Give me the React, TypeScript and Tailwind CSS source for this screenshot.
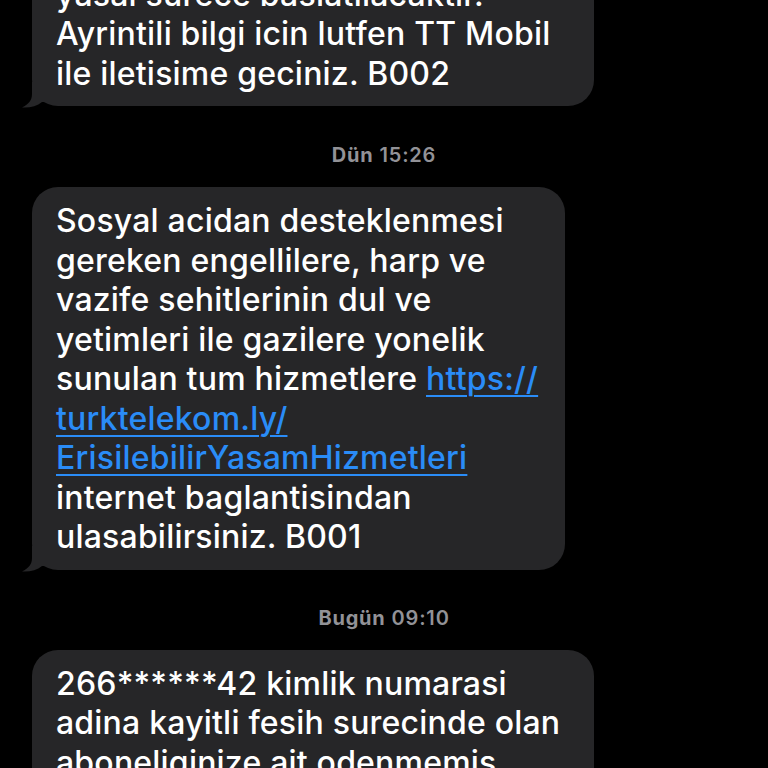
import React from "react";

const Tail = () => (
  <svg
    className="absolute left-[-11px] bottom-[-2px]"
    width="30"
    height="26"
    viewBox="0 0 30 26"
  >
    <path
      d="M11 0 L11 12 C11 18 8 22 1 25.5 C9 26 16 24 21 20 L30 20 L30 0 Z"
      fill="#262628"
    />
  </svg>
);

const Bubble = ({
  lines,
  width,
  className = "",
}: {
  lines: React.ReactNode[];
  width: string;
  className?: string;
}) => (
  <div className={`relative ${width} ${className}`}>
    <div className="relative rounded-[26px] bg-[#262628] pl-[24px] pr-[16px] pt-[14px] pb-[13px] text-[32px] font-medium leading-[39.5px] text-white tracking-[0.2px]">
      {lines.map((l, i) => (
        <div key={i} className="whitespace-nowrap">
          {l}
        </div>
      ))}
    </div>
    <Tail />
  </div>
);

const Stamp = ({ day, time }: { day: string; time: string }) => (
  <div className="flex justify-center text-[20px] leading-[24px] tracking-[0.8px] text-[#929297]">
    <span className="font-bold">{day}</span>
    <span className="ml-[6px] font-semibold">{time}</span>
  </div>
);

const Link = ({ children }: { children: React.ReactNode }) => (
  <span className="text-[#2a8cf7] underline decoration-[2px] underline-offset-[5px]">
    {children}
  </span>
);

export default function App() {
  return (
    <div
      className="h-[768px] w-[768px] overflow-hidden bg-black"
      style={{ fontFamily: "Inter, 'Noto Sans', sans-serif" }}
    >
      <div className="flex flex-col items-start pl-[32px]">
        <Bubble
          width="w-[562px]"
          className="-mt-[39.5px]"
          lines={[
            "yasal surece baslatilacaktir.",
            "Ayrintili bilgi icin lutfen TT Mobil",
            "ile iletisime geciniz. B002",
          ]}
        />
        <div className="mt-[37px] mb-[20px] w-[704px]">
          <Stamp day="Dün" time="15:26" />
        </div>
        <Bubble
          width="w-[533px]"
          lines={[
            "Sosyal acidan desteklenmesi",
            "gereken engellilere, harp ve",
            "vazife sehitlerinin dul ve",
            "yetimleri ile gazilere yonelik",
            <>
              sunulan tum hizmetlere <Link>https://</Link>
            </>,
            <Link>turktelekom.ly/</Link>,
            <Link>ErisilebilirYasamHizmetleri</Link>,
            "internet baglantisindan",
            "ulasabilirsiniz. B001",
          ]}
        />
        <div className="mt-[36px] mb-[20px] w-[704px]">
          <Stamp day="Bugün" time="09:10" />
        </div>
        <Bubble
          width="w-[562px]"
          lines={[
            "266******42 kimlik numarasi",
            "adina kayitli fesih surecinde olan",
            "aboneliginize ait odenmemis",
            "borcunuz bulunmaktadir.",
          ]}
        />
      </div>
    </div>
  );
}
